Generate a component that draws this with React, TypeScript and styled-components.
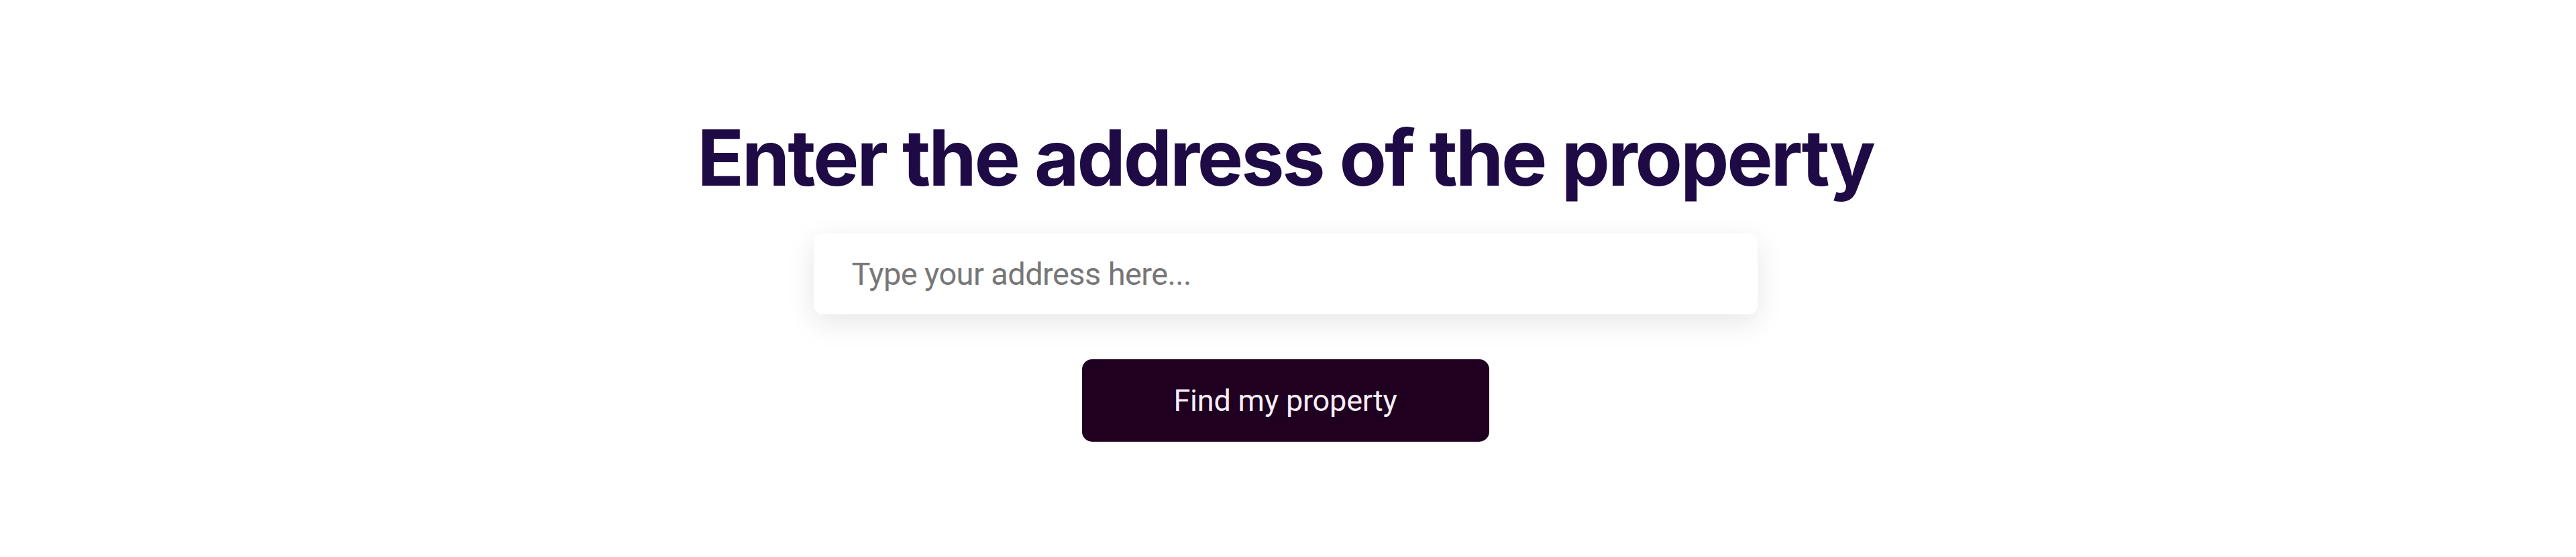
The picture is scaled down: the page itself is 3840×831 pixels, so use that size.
import styled, { createGlobalStyle } from 'styled-components'

const GlobalStyle = createGlobalStyle`
  html, body {
    margin: 0;
    padding: 0;
    background: #ffffff;
  }
`

const Page = styled.main`
  display: flex;
  flex-direction: column;
  align-items: center;
  padding: 166px 8px 0 0;
  min-height: 831px;
  box-sizing: border-box;
`

const Title = styled.h1`
  margin: 0;
  font-family: Inter, 'Liberation Sans', sans-serif;
  font-weight: 700;
  font-size: 115px;
  line-height: 139px;
  letter-spacing: -3.2px;
  color: #1e0a45;
`

const Form = styled.form`
  display: flex;
  flex-direction: column;
  align-items: center;
  gap: 67px;
  margin-top: 43px;
`

const AddressInput = styled.input`
  width: 1407px;
  height: 121px;
  box-sizing: border-box;
  padding: 0 57px;
  border: none;
  border-radius: 14px;
  background: #ffffff;
  box-shadow: 0 12px 44px rgba(0, 0, 0, 0.1);
  font-family: Roboto, 'Liberation Sans', sans-serif;
  font-size: 47px;
  letter-spacing: -0.6px;
  color: #333333;
  outline: none;

  &::placeholder {
    color: #777777;
  }
`

const SubmitButton = styled.button`
  width: 607px;
  height: 123px;
  border: none;
  border-radius: 15px;
  background: #1f0020;
  color: #f7eff7;
  font-family: Roboto, 'Liberation Sans', sans-serif;
  font-size: 45px;
  letter-spacing: -0.2px;
  cursor: pointer;
`

const App = () => {
  return (
    <>
      <GlobalStyle />
      <Page>
        <Title>Enter the address of the property</Title>
        <Form onSubmit={(e) => e.preventDefault()}>
          <AddressInput type='text' placeholder='Type your address here...' />
          <SubmitButton type='submit'>Find my property</SubmitButton>
        </Form>
      </Page>
    </>
  )
}

export default App
